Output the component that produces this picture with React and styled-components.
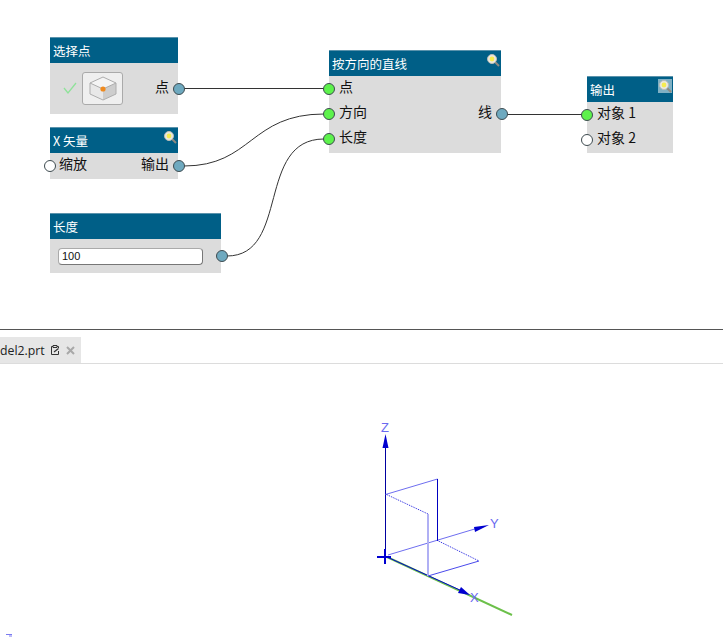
import styled, { createGlobalStyle } from 'styled-components'

const GlobalStyle = createGlobalStyle`
  html, body { margin: 0; padding: 0; background: #fff; }
  body { font-family: "Noto Sans CJK SC", "Liberation Sans", sans-serif; overflow: hidden; }
`

const Page = styled.div`
  width: 723px;
  height: 637px;
  display: flex;
  flex-direction: column;
  overflow: hidden;
`

const Canvas = styled.div`
  position: relative;
  height: 329px;
  border-bottom: 1px solid #555;
  flex-shrink: 0;
`

const Wires = styled.svg`
  position: absolute;
  left: 0;
  top: 0;
`

const Node = styled.div`
  position: absolute;
  left: ${props => props.$x}px;
  top: ${props => props.$y}px;
  width: ${props => props.$w}px;
  background: #dcdcdc;
  padding-bottom: ${props => props.$pad || 0}px;
`

const Header = styled.div`
  height: 25px;
  border-top: 1px solid #5b93ac;
  background: #005f87;
  color: #fff;
  font-size: 12.5px;
  line-height: 25px;
  padding: 0 1px 0 3px;
  display: flex;
  justify-content: space-between;
  align-items: flex-start;
`

const Row = styled.div`
  position: relative;
  height: ${props => props.$h || 25}px;
  display: flex;
  align-items: center;
  padding: 0 9px 6px ${props => props.$inset || 9}px;
  box-sizing: border-box;
  font-size: 14px;
  color: #111;
`

const RightLabel = styled.span`
  margin-left: auto;
`

const Port = styled.span`
  position: absolute;
  top: 50%;
  margin-top: -6px;
  ${props => props.$right ? 'right: -7px;' : 'left: -6px;'}
  width: 12px;
  height: 12px;
  box-sizing: border-box;
  border-radius: 50%;
  border: 1px solid #3e4b50;
  background: ${props => props.$kind === 'in' ? '#5df24c' : props.$kind === 'open' ? '#fff' : '#6ea9bf'};
`

const Check = styled.svg`
  margin-left: 4px;
  margin-top: 4px;
`

const CubeButton = styled.div`
  width: 41px;
  height: 33px;
  box-sizing: border-box;
  margin-left: 5px;
  margin-top: 6px;
  border: 1px solid #aaa;
  border-radius: 3px;
  background: #efefef;
  display: flex;
  align-items: center;
  justify-content: center;
`

const LengthField = styled.div`
  width: 145px;
  height: 17px;
  margin-left: -1px;
  margin-top: 6px;
  box-sizing: border-box;
  border: 1px solid #aaa;
  border-bottom-color: #777;
  border-right-color: #777;
  border-radius: 4px;
  background: #fff;
  font-family: "Liberation Sans", sans-serif;
  font-size: 11px;
  line-height: 15px;
  padding-left: 3px;
  color: #111;
`

const TabBar = styled.div`
  height: 26px;
  margin-top: 7px;
  border-bottom: 1px solid #dcdcdc;
  flex-shrink: 0;
  display: flex;
`

const Tab = styled.div`
  width: 81px;
  background: #e6e6e6;
  display: flex;
  align-items: center;
  font-family: "Open Sans", sans-serif;
  font-size: 12.3px;
  color: #222;
  white-space: nowrap;
`

const TabIcons = styled.span`
  display: flex;
  align-items: center;
  gap: 6px;
  margin-left: 5px;
`

const Viewport = styled.svg`
  display: block;
  flex: 1;
`

const AxisLabel = styled.text`
  font-family: "Liberation Sans", sans-serif;
  font-size: 13px;
  fill: #6a6af0;
`

const MagnifierBox = styled.svg`
  margin-top: 2px;
  background: ${props => props.$boxed ? '#7fb0c4' : 'none'};
`

const Magnifier = ({ boxed }) => (
  <MagnifierBox $boxed={boxed} width="14" height="14" viewBox="0 0 14 14">
    <line x1="8" y1="8" x2="13" y2="13" stroke="#8e8a80" strokeWidth="2" />
    <circle cx="6" cy="6" r="4.5" fill="#e9e9e2" stroke="#bdbdb5" />
    <circle cx="6" cy="6" r="2.4" fill="#f5ec50" />
  </MagnifierBox>
)

const CloseIcon = () => (
  <svg width="9" height="9" viewBox="0 0 9 9">
    <path d="M1 1 L8 8 M8 1 L1 8" stroke="#a8a8a8" strokeWidth="2" />
  </svg>
)

const PinIcon = () => (
  <svg width="10" height="10" viewBox="0 0 10 10" fill="none" stroke="#333" strokeWidth="1">
    <path d="M7 1.5 H8.5 V3 M8.5 6 V9.5 H1.5 V1.5 H3" />
    <path d="M3 0.5 H7 V2.5 H3 Z" />
    <path d="M4 7 L8.5 3.5" strokeWidth="1.2" />
  </svg>
)

const Cube = () => (
  <svg width="28" height="25" viewBox="0 0 28 25">
    <path d="M14 1 L27 7 L27 18 L14 24 L1 18 L1 7 Z" fill="#f4f4f4" />
    <path d="M14 13 L27 7 L27 18 L14 24 Z" fill="#cdcdcd" />
    <path d="M14 13 L1 7 L1 18 L14 24 Z" fill="#e8e8e8" />
    <path d="M14 1 L27 7 L27 18 L14 24 L1 18 L1 7 Z M1 7 L14 13 L27 7" fill="none" stroke="#adadad" />
    <circle cx="14" cy="13" r="2.6" fill="#ef8a1f" />
  </svg>
)

const App = () => {
  return (
    <Page>
      <GlobalStyle />
      <Canvas>
        <Wires width="723" height="329" fill="none" stroke="#333" strokeWidth="1">
          <path d="M184 88.5 H324" />
          <path d="M184 166 C252 166 250 114 324 114" />
          <path d="M227 256 C290 256 256 139 324 139" />
          <path d="M507 114.5 H582" />
        </Wires>

        <Node $x={50} $y={37} $w={128}>
          <Header>选择点</Header>
          <Row $h={51}>
            <Check width="14" height="14" viewBox="0 0 14 14" fill="none" stroke="#8fe29a" strokeWidth="1.3">
              <path d="M1 7 L5 12 L13 2" />
            </Check>
            <CubeButton><Cube /></CubeButton>
            <RightLabel>点</RightLabel>
            <Port $right />
          </Row>
        </Node>

        <Node $x={50} $y={127} $w={128}>
          <Header>X 矢量<Magnifier /></Header>
          <Row $h={26}>
            <Port $kind="open" />
            缩放
            <RightLabel>输出</RightLabel>
            <Port $right />
          </Row>
        </Node>

        <Node $x={50} $y={213} $w={171}>
          <Header>长度</Header>
          <Row $h={34}>
            <LengthField>100</LengthField>
            <Port $right />
          </Row>
        </Node>

        <Node $x={329} $y={50} $w={172} $pad={2}>
          <Header>按方向的直线<Magnifier /></Header>
          <Row $inset={10}>
            <Port $kind="in" />
            点
          </Row>
          <Row $inset={10}>
            <Port $kind="in" />
            方向
            <RightLabel>线</RightLabel>
            <Port $right />
          </Row>
          <Row $inset={10}>
            <Port $kind="in" />
            长度
          </Row>
        </Node>

        <Node $x={587} $y={76} $w={86}>
          <Header>输出<Magnifier boxed /></Header>
          <Row $h={25} $inset={10}>
            <Port $kind="in" />
            对象 1
          </Row>
          <Row $h={26} $inset={10}>
            <Port $kind="open" />
            对象 2
          </Row>
        </Node>
      </Canvas>

      <TabBar>
        <Tab>
          del2.prt
          <TabIcons><PinIcon /><CloseIcon /></TabIcons>
        </Tab>
      </TabBar>

      <Viewport viewBox="0 364 723 273" fill="none">
        <path d="M387 557 L512 615" stroke="#6cc04a" strokeWidth="2" />
        <path d="M387 557 L462 591" stroke="#0000d0" strokeWidth="1" />
        <path d="M470 595 L458 593 L461 587 Z" fill="#0000d0" />
        <path d="M385.5 560 V446" stroke="#0000a0" strokeWidth="1" />
        <path d="M385.5 434 L388.5 448 H382.5 Z" fill="#0000d0" />
        <path d="M377 557 H391 M385 549 V564" stroke="#0000d0" strokeWidth="2" />
        <path d="M388 555 L478 528" stroke="#6e6ef0" strokeWidth="1" />
        <path d="M489 525 L475 532 L474 527 Z" fill="#0000d0" />
        <path d="M385.5 494.5 L437.5 479" stroke="#6e6ef0" strokeWidth="1" />
        <path d="M437.5 479 V541" stroke="#0000c0" strokeWidth="1" />
        <path d="M385.5 494 L428 514 M437.5 540.5 L479 561" stroke="#2020e0" strokeWidth="1" strokeDasharray="1 1" />
        <path d="M428 514 V576" stroke="#b0b0f4" strokeWidth="2" />
        <path d="M479 561 L428 576" stroke="#4a4aec" strokeWidth="1" />
        <AxisLabel x="381" y="432">Z</AxisLabel>
        <AxisLabel x="490" y="528">Y</AxisLabel>
        <AxisLabel x="470" y="602">X</AxisLabel>
        <path d="M6 634.5 H12 M9 636 H12" stroke="#7a7af0" strokeWidth="1" />
      </Viewport>
    </Page>
  )
}

export default App
